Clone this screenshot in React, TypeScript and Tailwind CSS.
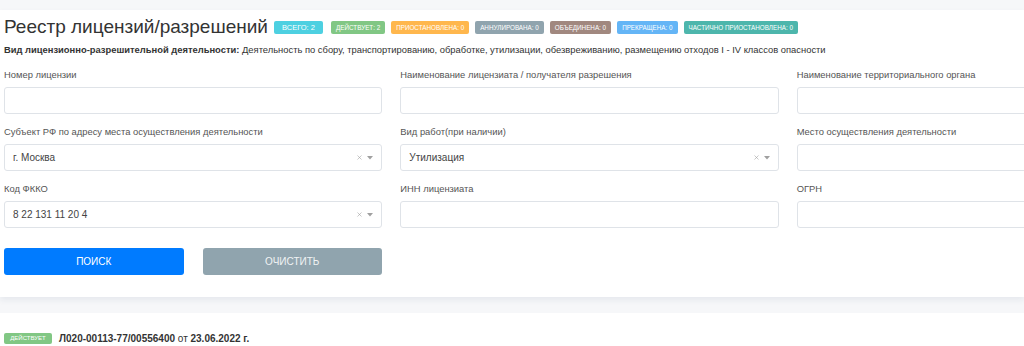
import { X } from "lucide-react";

const badges = [
  { label: "Всего: 2", color: "bg-[#4dd0e1]", big: true },
  { label: "Действует: 2", color: "bg-[#81c784]" },
  { label: "Приостановлена: 0", color: "bg-[#ffb74d]" },
  { label: "Аннулирована: 0", color: "bg-[#90a4ae]" },
  { label: "Объединена: 0", color: "bg-[#a1887f]" },
  { label: "Прекращена: 0", color: "bg-[#64b5f6]" },
  { label: "Частично приостановлена: 0", color: "bg-[#4db6ac]" },
];

type Field = { label: string; value?: string; select?: boolean };

const fields: Field[] = [
  { label: "Номер лицензии" },
  { label: "Наименование лицензиата / получателя разрешения" },
  { label: "Наименование территориального органа" },
  { label: "Субъект РФ по адресу места осуществления деятельности", value: "г. Москва", select: true },
  { label: "Вид работ(при наличии)", value: "Утилизация", select: true },
  { label: "Место осуществления деятельности" },
  { label: "Код ФККО", value: "8 22 131 11 20 4", select: true },
  { label: "ИНН лицензиата" },
  { label: "ОГРН" },
];

function FormField({ field }: { field: Field }) {
  return (
    <div className="flex flex-col">
      <span className="text-[9.4px] leading-[13px] text-[#555] mb-[6px] whitespace-nowrap">{field.label}</span>
      <div className="h-[27px] rounded-[3px] border border-[#dfe3e8] bg-white flex items-center pl-[8px] pr-[8px] text-[10px] text-[#444]">
        <span className="flex-1">{field.value}</span>
        {field.select && (
          <div className="flex items-center gap-[4px] text-[#a0a0a0]">
            <X size={7} strokeWidth={2} />
            <svg width="6" height="4" viewBox="0 0 6 4">
              <path d="M0 0h6L3 3.5z" fill="#a0a0a0" />
            </svg>
          </div>
        )}
      </div>
    </div>
  );
}

export default function App() {
  return (
    <div
      className="w-full h-[346px] overflow-hidden bg-[#f6f7f9] pt-[10px]"
      style={{ fontFamily: '"Liberation Sans", Arial, sans-serif' }}
    >
      <div className="bg-white shadow-[0_3px_6px_rgba(40,60,100,0.08)] pl-[4px] pt-[4px] pb-[22px]">
        <div className="flex items-center h-[26px] gap-[6px]">
          <h1 className="text-[19px] leading-[26px] text-[#333] font-normal whitespace-nowrap">
            Реестр лицензий/разрешений
          </h1>
          <div className="flex items-center gap-[6px] mt-[1px]">
            {badges.map((b) => (
              <span
                key={b.label}
                className={`${b.color} h-[13px] ${b.big ? "px-[8px] text-[7.5px] mr-[2px]" : "px-[5px] text-[6.3px]"} rounded-[2px] flex items-center uppercase text-white whitespace-nowrap`}
              >
                {b.label}
              </span>
            ))}
          </div>
        </div>
        <p className="mt-[3px] text-[9.4px] leading-[14px] text-[#333] whitespace-nowrap">
          <b className="font-bold">Вид лицензионно-разрешительной деятельности:</b> Деятельность по сбору,
          транспортированию, обработке, утилизации, обезвреживанию, размещению отходов I - IV классов опасности
        </p>
        <div className="mt-[11px] w-[1171px] grid grid-cols-3 gap-x-[18px] gap-y-[11px]">
          {fields.map((f) => (
            <FormField key={f.label} field={f} />
          ))}
        </div>
        <div className="mt-[20px] w-[378px] flex gap-[19px]">
          <button className="flex-1 h-[27px] rounded-[3px] bg-[#007bff] text-white text-[10px] uppercase">
            Поиск
          </button>
          <button className="flex-1 h-[27px] rounded-[3px] bg-[#90a4ae] text-[#f1f3f4] text-[10px] uppercase">
            Очистить
          </button>
        </div>
      </div>
      <div className="mt-[16px] bg-white pl-[4px] pt-[18px] h-[60px]">
        <div className="flex items-center gap-[7px] text-[10px] text-[#333]">
          <span className="bg-[#81c784] h-[11px] w-[48px] justify-center rounded-[2px] flex items-center text-[6px] uppercase text-white">
            Действует
          </span>
          <span>
            <b>Л020-00113-77/00556400</b> от <b>23.06.2022 г.</b>
          </span>
        </div>
      </div>
    </div>
  );
}
